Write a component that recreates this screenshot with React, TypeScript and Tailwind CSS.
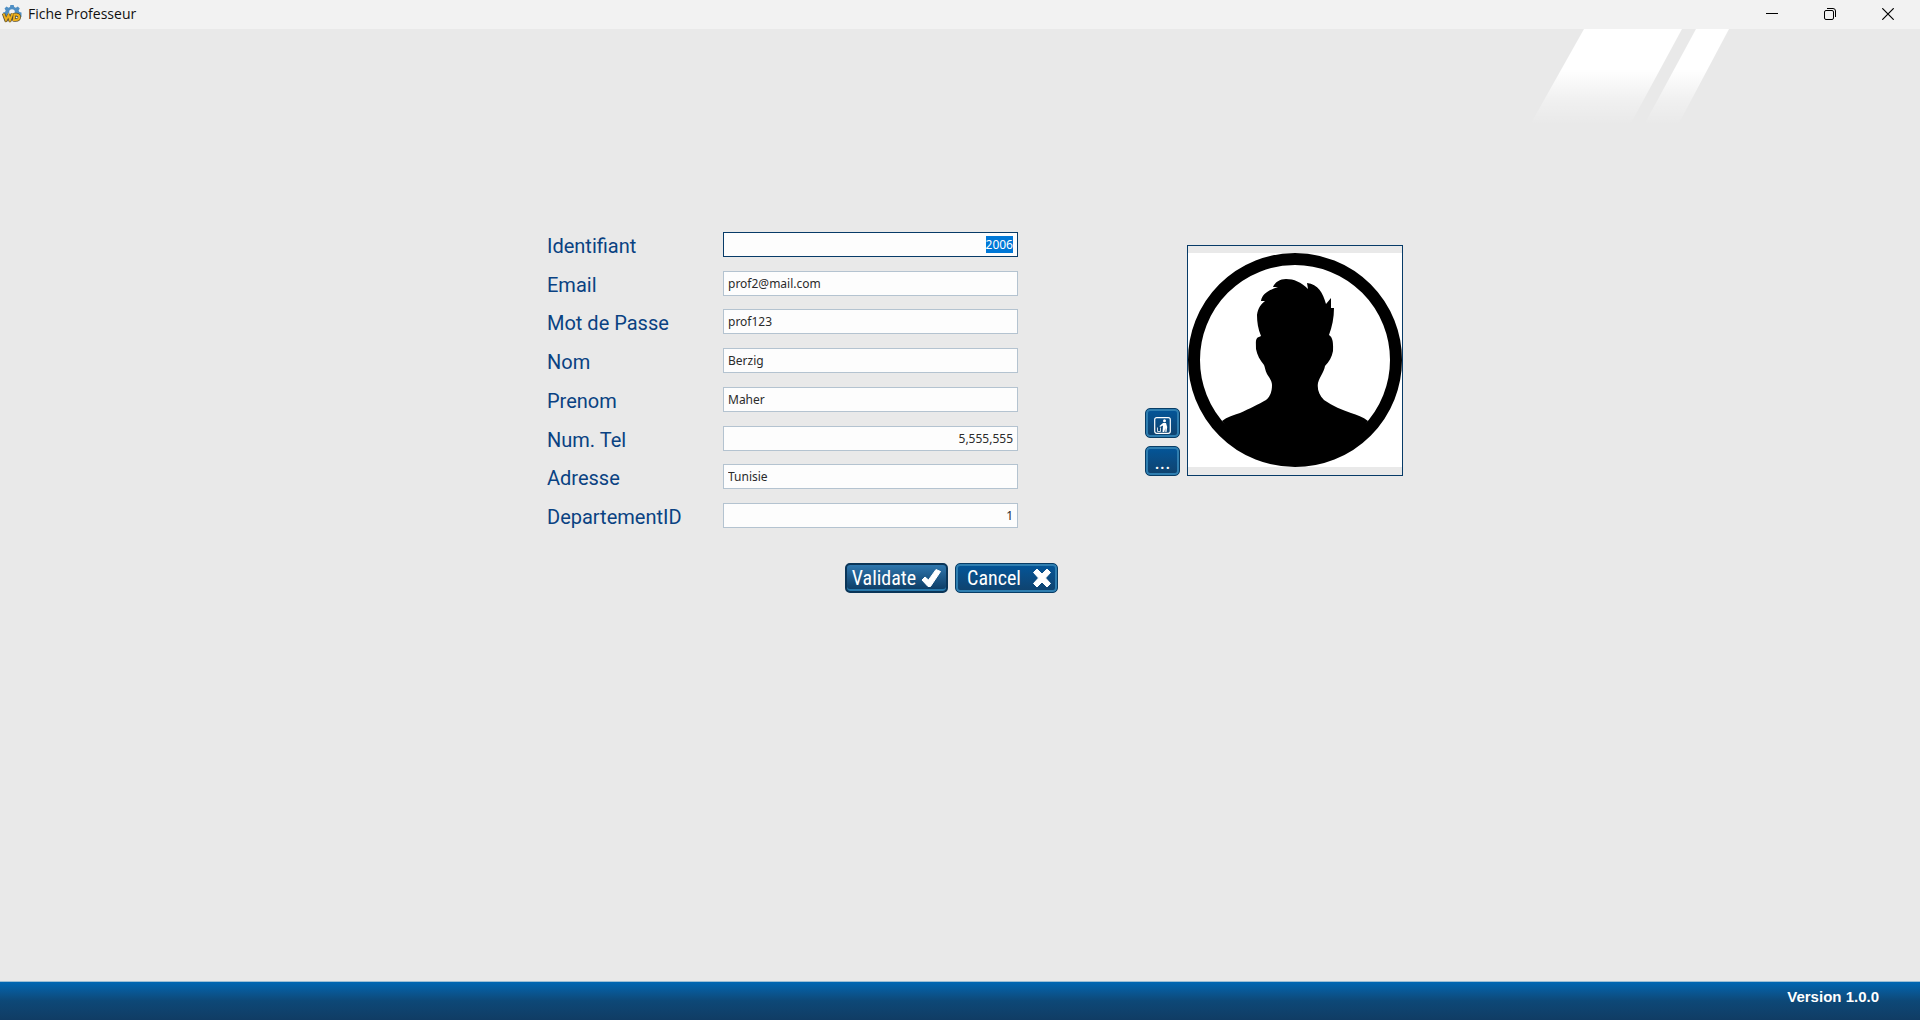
import { useEffect, useRef } from "react";

type FieldProps = { id: string; label: string; value: string; numeric?: boolean };

const fields: FieldProps[] = [
  { id: "identifiant", label: "Identifiant", value: "2006", numeric: true },
  { id: "email", label: "Email", value: "prof2@mail.com" },
  { id: "motdepasse", label: "Mot de Passe", value: "prof123" },
  { id: "nom", label: "Nom", value: "Berzig" },
  { id: "prenom", label: "Prenom", value: "Maher" },
  { id: "tel", label: "Num. Tel", value: "5,555,555", numeric: true },
  { id: "adresse", label: "Adresse", value: "Tunisie" },
  { id: "departement", label: "DepartementID", value: "1", numeric: true },
];

function AppIcon() {
  return (
    <svg width="20" height="20" viewBox="0 0 20 20" aria-hidden="true">
      <path
        d="M8.300 1h3.400l.5 2 1.600.7 2-1.200 2 2-1.200 2 .8 1.500 2.100.6V13H1V8.600l2-.6.7-1.500-1.200-2 2-2 2 1.200L8 3z"
        fill="#4f8fc4"
      />
      <circle cx="10" cy="8" r="2.800" fill="#f2f2f2" />
      <path d="M1.500 9.500 4 16.500 6.500 11.500 8 16.500 10.500 9.500M12.500 10.500h2q3 .5 2.800 3-.5 2.500-3.500 2.500h-2z" fill="none" stroke="#5c5030" strokeWidth="3.400" strokeLinejoin="round" />
      <path d="M1.500 9.500 4 16 6.500 11 8 16 10.500 9.500M12.500 10.500h2q3 .5 2.800 3-.5 2.500-3.500 2.500h-2z" fill="none" stroke="#eeb01c" strokeWidth="1.900" />
    </svg>
  );
}

function TitleBar() {
  return (
    <header className="flex h-[29px] items-start justify-between bg-[#f2f2f2] pl-[2px] font-['Open_Sans',sans-serif]">
      <div className="flex h-[28px] items-center gap-[6px]">
        <AppIcon />
        <h1 className="text-[14px] leading-5 text-[#101010]">Fiche Professeur</h1>
      </div>
      <div className="flex items-center pr-[3px]">
        <button aria-label="Minimize" className="flex h-[28px] w-[58px] items-center justify-center">
          <svg width="12" height="12" viewBox="0 0 12 12" stroke="#000"><path d="M0 5.500h12" /></svg>
        </button>
        <button aria-label="Restore" className="flex h-[28px] w-[58px] items-center justify-center">
          <svg width="12" height="12" viewBox="0 0 12 12" fill="none" stroke="#000">
            <rect x=".5" y="2.500" width="9" height="9" rx="1.500" />
            <path d="M3 .5h6a2.500 2.500 0 0 1 2.500 2.500v6" />
          </svg>
        </button>
        <button aria-label="Close" className="flex h-[28px] w-[58px] items-center justify-center">
          <svg width="12" height="12" viewBox="0 0 12 12" stroke="#000" strokeWidth="1.200"><path d="M.3.3l11.400 11.400M11.700.3.3 11.700" /></svg>
        </button>
      </div>
    </header>
  );
}

function Slashes() {
  return (
    <svg className="absolute right-[190px] top-0" width="200" height="96" viewBox="0 0 200 96" aria-hidden="true">
      <defs>
        <linearGradient id="fade" x1="0" y1="0" x2="0" y2="96" gradientUnits="userSpaceOnUse">
          <stop offset=".42" stopColor="#fff" />
          <stop offset=".75" stopColor="#fff" stopOpacity=".32" />
          <stop offset="1" stopColor="#fff" stopOpacity="0" />
        </linearGradient>
      </defs>
      <path d="M54 0h98L100 96H0z" fill="url(#fade)" />
      <path d="M166 0h33L148 96H114z" fill="url(#fade)" />
    </svg>
  );
}

function Field({ id, label, value, numeric }: FieldProps) {
  const ref = useRef<HTMLInputElement>(null);
  const first = id === "identifiant";
  useEffect(() => {
    if (first && ref.current) {
      ref.current.focus();
      ref.current.select();
    }
  }, [first]);
  return (
    <div className="flex h-[25px] items-start">
      <label htmlFor={id} className="w-[176px] pt-px font-[Roboto,sans-serif] text-[20px] leading-[26px] text-[#0a4282]">
        {label}
      </label>
      <input
        id={id}
        ref={ref}
        defaultValue={value}
        className={
          "h-[25px] w-[295px] border border-[#b4c3d0] bg-[#fdfdfd] px-[4px] font-['Noto_Sans',sans-serif] text-[12px] leading-[18px] text-[#2b2b2b] outline-none selection:bg-[#0078d7] selection:text-white focus:border-[#073b68] " +
          (numeric ? "text-right" : "text-left")
        }
      />
    </div>
  );
}

const blueButton =
  "flex h-[30px] items-center justify-center rounded-[5px] border border-[#083d66] bg-linear-to-b from-[#02569a] to-[#0f426d] text-white shadow-[inset_0_0_0_2px_#2f7eb0]";

function Actions() {
  return (
    <div className="flex gap-[7px] pl-[298px] font-['Roboto_Condensed','Liberation_Sans_Narrow',Roboto,sans-serif] text-[20px] leading-6">
      <button className="flex h-[30px] w-[103px] items-center justify-center gap-[5px] rounded-[5px] border-2 border-[#0a3558] bg-linear-to-b from-[#2f77ae] to-[#0b3a62] text-white shadow-[inset_0_-2px_0_#2878aa]">
        Validate
        <svg width="20" height="20" viewBox="0 0 20 20" aria-hidden="true">
          <path d="M1 12l3-3 3.500 3L15 1.500 19.500 3.500 9.500 18.500H7z" fill="#fff" stroke="#fff" strokeLinejoin="round" />
        </svg>
      </button>
      <button className={blueButton + " w-[103px] gap-[12px] pl-[5px]"}>
        Cancel
        <svg width="18" height="20" viewBox="0 0 18 20" aria-hidden="true">
          <path d="M4 1l5 5 5-5 3.500 3.500-5 5.500 5 5.500L14 19l-5-5-5 5-3.500-3.500 5-5.500-5-5.500z" fill="#fff" stroke="#fff" strokeLinejoin="round" />
        </svg>
      </button>
    </div>
  );
}

function Portrait() {
  return (
    <div className="flex items-end gap-[7px]">
      <div className="flex flex-col gap-2">
        <button aria-label="Remove photo" className={blueButton + " w-[35px] pt-[4px]"}>
          <svg width="17" height="17" viewBox="0 0 17 17" fill="none" stroke="#fff" aria-hidden="true">
            <rect x=".7" y=".7" width="15.600" height="15.600" rx="2" strokeWidth="1.200" />
            <circle cx="10.500" cy="3.800" r="1.500" fill="#fff" stroke="none" />
            <path d="M9 6h3l1.200 4-.7 5h-1.200v-4l-1 4H8.500L9 8.500 6 10 5.500 9z" fill="#fff" stroke="none" />
            <path d="M3.500 10.500v4h3v-4" strokeWidth=".8" />
          </svg>
        </button>
        <button className={blueButton + " w-[35px] pt-[2px] font-[Roboto,sans-serif] text-[20px] leading-5"} aria-label="Choose photo">...</button>
      </div>
      <div className="h-[231px] w-[216px] border border-[#073b68] pt-[7px]">
        <svg width="214" height="214" viewBox="0 0 214 214" role="img" aria-label="Portrait">
          <rect width="214" height="214" fill="#fff" />
          <circle cx="107" cy="107" r="101" fill="none" stroke="#000" strokeWidth="12" />
          <path
            d="M34 168C39 164 46 162 52 160C61 156 71 151 78 147C83 143 84 137 84 132C84 128 81 124 79 121C77 117 77 114 76 112C72 107 69 102 68 96C68 90 67 85 71 84L73 83C70 76 69 69 69 62C70 55 73 51 77 48L73 48C74 41 81 37 90 34L85 34C87 29 92 26 98 26C106 26 113 29 120 36L119 30C130 31 135 40 138 51L143 45V55H146C146 65 144 74 141 82C146 85 145 94 145 98C144 104 141 109 137 113C136 119 132 123 130 130C129 136 131 142 136 147C145 153 154 157 163 160C169 162 175 164 180 168C163 192 138 208 107 208S51 192 34 168Z"
            fill="#000"
          />
        </svg>
      </div>
    </div>
  );
}

export default function App() {
  return (
    <div className="flex min-h-screen flex-col bg-[#e9e9e9]">
      <TitleBar />
      <main className="relative flex-1 pt-[203px]">
        <Slashes />
        <form className="flex items-start justify-center gap-[87px] pl-[30px]" onSubmit={(e) => e.preventDefault()}>
          <div className="flex flex-col gap-[35px]">
            <div className="flex h-[296px] flex-col justify-between">
              {fields.map((f) => (
                <Field key={f.id} {...f} />
              ))}
            </div>
            <Actions />
          </div>
          <div className="pt-[13px]">
            <Portrait />
          </div>
        </form>
      </main>
      <footer className="h-[39px] border-t border-[#9dbfd5] bg-linear-to-b from-[#0067b3] via-[#0d4877] to-[#103c64] pr-[41px] pt-[5px] text-right font-['Liberation_Sans',sans-serif] text-[15px] font-bold leading-5 text-white">
        Version 1.0.0
      </footer>
    </div>
  );
}
